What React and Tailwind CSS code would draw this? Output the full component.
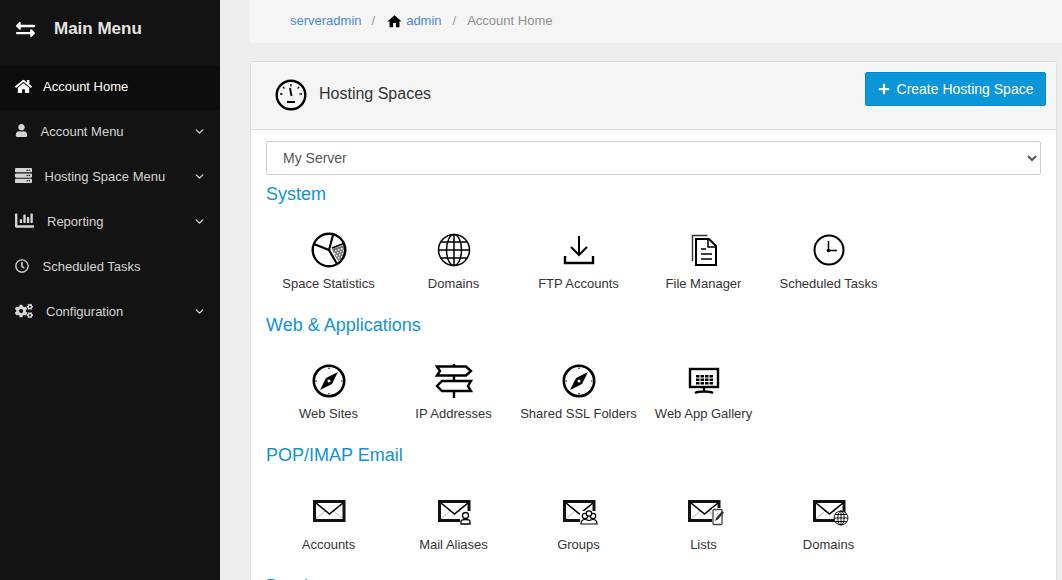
import { FaHome, FaUser, FaServer, FaChartBar, FaCogs, FaExchangeAlt, FaPlus, FaRegClock } from "react-icons/fa"
import { MdHome } from "react-icons/md"
import { LuChevronDown } from "react-icons/lu"

const FONT = "font-['Liberation_Sans',Arial,sans-serif]"

const MENU = [
  { label: "Account Home", Icon: FaHome, w: "w-[28px]", active: true, size: 17 },
  { label: "Account Menu", Icon: FaUser, w: "w-[25.500px]", caret: true, size: 13 },
  { label: "Hosting Space Menu", Icon: FaServer, w: "w-[29.500px]", caret: true, size: 17 },
  { label: "Reporting", Icon: FaChartBar, w: "w-[32px]", caret: true, size: 19 },
  { label: "Scheduled Tasks", Icon: FaRegClock, w: "w-[27.500px]", size: 14 },
  { label: "Configuration", Icon: FaCogs, w: "w-[31px]", caret: true, size: 18 },
]

// dotted slice of the pie, listed by hand
const PIE_DOTS = [
  [24, 18], [27, 17], [30, 16],
  [23, 21], [26, 20], [29, 19], [32, 18],
  [25, 23], [28, 22], [31, 21],
  [27, 25], [30, 24],
  [28, 28], [31, 27],
]

function Pie() {
  return (
    <svg width="36" height="36" viewBox="0 0 36 36" fill="none" stroke="#000" strokeWidth="2.400">
      <path d="M21 17l12-4c2 7 0 13-5 17l-3.500-5z" fill="#777" stroke="none" />
      {PIE_DOTS.map(([x, y]) => (
        <rect key={x + "-" + y} x={x} y={y} width="1.500" height="1.500" fill="#fff" stroke="none" />
      ))}
      <circle cx="18" cy="18" r="16.300" />
      <path d="M3 12l15 6 4-15" strokeWidth="2.200" />
      <path d="M18 18l8 14" strokeWidth="2.200" />
      <path d="M21 16l13-5" strokeWidth="1.600" />
    </svg>
  )
}

function Globe() {
  return (
    <svg width="34" height="34" viewBox="0 0 34 34" fill="none" stroke="#000" strokeWidth="1.500">
      <circle cx="17" cy="17" r="15.500" />
      <ellipse cx="17" cy="17" rx="7.500" ry="15.500" />
      <path d="M17 1.500v31M1.500 17h31M4 9h26M4 25h26" />
    </svg>
  )
}

function Download() {
  return (
    <svg width="32" height="30" viewBox="0 0 32 30" fill="none" stroke="#000" strokeWidth="2">
      <path d="M16 1v18M8 12l8 8 8-8" />
      <path d="M2 21v7h28v-7" strokeWidth="2.400" />
    </svg>
  )
}

function Doc() {
  return (
    <svg width="26" height="32" viewBox="0 0 26 32" fill="none" stroke="#000" strokeWidth="2">
      <path d="M1.500 27V1.500h15" strokeWidth="1.400" stroke="#333" />
      <path d="M5 31V5h13l7 7v19z" strokeWidth="2" />
      <path d="M17 5v8h8" strokeWidth="1.500" />
      <path d="M10 15h5M10 20h11M10 25h11" strokeWidth="1.400" />
    </svg>
  )
}

function Clock() {
  return (
    <svg width="32" height="32" viewBox="0 0 32 32" fill="none" stroke="#000" strokeWidth="2">
      <circle cx="16" cy="16" r="14.500" />
      <path d="M15.500 7v9.500H24" strokeWidth="1.500" />
      <circle cx="15.500" cy="16.500" r="1.800" fill="#000" stroke="none" />
    </svg>
  )
}

function Compass() {
  return (
    <svg width="34" height="34" viewBox="0 0 34 34" fill="none" stroke="#000" strokeWidth="2.600">
      <circle cx="17" cy="17" r="15.200" />
      <path d="M26 8l-12 6-6 12 12-6z" fill="#000" stroke="none" />
      <circle cx="17" cy="17" r="1.500" fill="#fff" stroke="none" />
      <path d="M17 3.500v1.500M17 29v1.500M3.500 17H5M29 17h1.500" strokeWidth="1.200" />
    </svg>
  )
}

function Signpost() {
  return (
    <svg width="38" height="34" viewBox="0 0 38 34" fill="none" stroke="#000" strokeWidth="2.400">
      <path d="M2 2.500h29l5 4.500-5 4.500H2l3-4.500z" />
      <path d="M36 17H7l-5 5 5 5h29l-3-5z" />
      <path d="M19 0v2.500M19 11.500V17M19 27v7" />
    </svg>
  )
}

function Monitor() {
  const keys = []
  for (let y = 9; y < 17; y += 3.500) {
    for (let x = 8; x < 26; x += 4.500) {
      keys.push(<rect key={x + "-" + y} x={x} y={y} width="3.500" height="2.500" fill="#000" stroke="none" />)
    }
  }
  return (
    <svg width="32" height="30" viewBox="0 0 32 30" fill="none" stroke="#000" strokeWidth="2.400">
      <rect x="2" y="3" width="28" height="18" />
      {keys}
      <path d="M16 21v4M7 27c3-2 15-2 18 0" />
    </svg>
  )
}

function Mail({ badge }) {
  return (
    <svg width="36" height="26" viewBox="0 0 36 26" fill="none" className="overflow-visible">
      <g transform="translate(2 1)">
        <rect x="1.500" y="2.500" width="29.500" height="19" stroke="#111" strokeWidth="3" />
        <path d="M3 4l13.500 11L30 4" stroke="#000" strokeWidth="1.600" />
        <path d="M3 20l9-8M30 20l-9-8" stroke="#999" strokeWidth="0.700" />
      </g>
      {badge === "user" && (
        <g transform="translate(0 1)">
          <rect x="24" y="12" width="11" height="14" fill="#fff" />
          <circle cx="29.500" cy="16.500" r="3" fill="#fff" stroke="#000" strokeWidth="1.300" />
          <path d="M25 25v-2.500c0-1.500 2-2 4.500-2s4.500.5 4.500 2V25z" fill="#fff" stroke="#000" strokeWidth="1.300" />
        </g>
      )}
      {badge === "group" && (
        <g transform="translate(0 1)" stroke="#000" strokeWidth="1.200" fill="#fff">
          <rect x="19" y="12" width="18" height="14" fill="#fff" stroke="none" />
          <circle cx="24" cy="17" r="2.700" />
          <circle cx="32" cy="17" r="2.700" />
          <circle cx="28" cy="14.500" r="2.700" />
          <path d="M20 25c0-3 2-4.500 4-4.500s3 1 4 1 2-1 4-1 4 1.500 4 4.500z" />
        </g>
      )}
      {badge === "list" && (
        <g transform="translate(2 1)">
          <rect x="24" y="9" width="12" height="17" fill="#fff" />
          <rect x="25" y="10.500" width="9" height="15" rx="1" fill="#fff" stroke="#444" strokeWidth="1.300" />
          <path d="M27 22l1-3 6-7 2 1.500-6 7z" fill="#333" />
        </g>
      )}
      {badge === "globe" && (
        <g transform="translate(1 1)" stroke="#000" strokeWidth="0.900" fill="none">
          <circle cx="29" cy="19" r="7" fill="#fff" />
          <ellipse cx="29" cy="19" rx="3.200" ry="7" />
          <path d="M29 12v14M22 19h14M23 15.500h12M23 22.500h12" />
        </g>
      )}
    </svg>
  )
}

const SECTIONS = [
  {
    title: "System",
    items: [
      ["Space Statistics", <Pie />],
      ["Domains", <Globe />],
      ["FTP Accounts", <Download />],
      ["File Manager", <Doc />],
      ["Scheduled Tasks", <Clock />],
    ],
  },
  {
    title: "Web & Applications",
    items: [
      ["Web Sites", <Compass />],
      ["IP Addresses", <Signpost />],
      ["Shared SSL Folders", <Compass />],
      ["Web App Gallery", <Monitor />],
    ],
  },
  {
    title: "POP/IMAP Email",
    items: [
      ["Accounts", <Mail />],
      ["Mail Aliases", <Mail badge="user" />],
      ["Groups", <Mail badge="group" />],
      ["Lists", <Mail badge="list" />],
      ["Domains", <Mail badge="globe" />],
    ],
  },
]

function Sidebar() {
  return (
    <aside className="w-[220px] h-full shrink-0 bg-[#131313] text-[#d5d5d5] text-[13px]">
      <div className="h-[66px] flex items-center text-white">
        <FaExchangeAlt size={19} className="ml-[16px] mb-[7px] -scale-x-100" />
        <span className="ml-[19px] mb-[9px] text-[17px] font-bold text-[#e4e4e4]">Main Menu</span>
      </div>
      {MENU.map(({ label, Icon, w, active, caret, size }) => (
        <div
          key={label}
          className={`flex items-center pb-[2px] pl-[15px] pr-[14px] ${active ? "h-[44px] bg-[#0d0d0d] text-white" : "h-[45px]"}`}
        >
          <span className={`${w} flex shrink-0 mb-[2px]`}>
            <Icon size={size} />
          </span>
          <span className="flex-1">{label}</span>
          {caret && <LuChevronDown size={13} strokeWidth={2.500} />}
        </div>
      ))}
    </aside>
  )
}

function Breadcrumb() {
  return (
    <div className="h-[43px] bg-[#f5f5f5] flex items-center pl-[40px] pb-[1px] text-[13px]">
      <a className="text-[#4a8bce]">serveradmin</a>
      <span className="mx-[10px] text-[#999]">/</span>
      <MdHome size={17} className="text-black ml-[1px] mr-[3px]" />
      <a className="text-[#4a8bce]">admin</a>
      <span className="mx-[11px] text-[#999]">/</span>
      <span className="text-[#8f8f8f]">Account Home</span>
    </div>
  )
}

function Gauge() {
  return (
    <svg width="32" height="32" viewBox="0 0 32 32" fill="none" stroke="#000" strokeWidth="2.400">
      <circle cx="16" cy="16" r="14.300" />
      <path d="M16 5v2.500M8 8l1.500 1.500M24 8l-1.500 1.500M5 15h2.500M24.500 15H27" strokeWidth="1.300" />
      <path d="M15 9l1.500 8" strokeWidth="1.800" />
      <path d="M12 23h8" strokeWidth="2" />
    </svg>
  )
}

export default function App() {
  return (
    <div className={`${FONT} w-[1062px] h-[580px] overflow-hidden flex bg-[#eeeeee]`}>
      <Sidebar />
      <main className="flex-1 pl-[30px] min-w-0">
        <Breadcrumb />
        <section className="mt-[18px] mr-[5px] h-[600px] bg-white border border-[#ddd] rounded-[3px]">
          <div className="h-[68px] bg-[#f5f5f5] border-b border-[#ddd] flex justify-between pl-[24px] pr-[10px]">
            <div className="flex items-center mt-[-2px] text-[16px] text-[#333]">
              <Gauge />
              <span className="ml-[12px] mb-[2px]">Hosting Spaces</span>
            </div>
            <button className="h-[34px] w-[181px] mt-[10px] bg-[#0a96d8] border border-[#0787c4] rounded-[2px] flex items-center justify-center text-white text-[14px]">
              <FaPlus size={12} className="mr-[7px]" />
              Create Hosting Space
            </button>
          </div>
          <div className="px-[15px] pt-[11px]">
            <select className="w-full h-[34px] pl-[12px] pr-[2px] bg-white border border-[#ccc] rounded-[2px] text-[14px] text-[#555]">
              <option>My Server</option>
            </select>
            {SECTIONS.map((s) => (
              <div key={s.title} className="h-[130.500px] pt-[9px]">
                <h3 className="text-[18px] leading-[20px] text-[#0f93d6]">{s.title}</h3>
                <div className="flex mt-[26px]">
                  {s.items.map(([label, icon]) => (
                    <div key={label} className="w-[125px] flex flex-col items-center text-[13px] text-[#333]">
                      <div className="h-[40px] flex items-center justify-center">{icon}</div>
                      <span className="mt-[4.500px] leading-[18px]">{label}</span>
                    </div>
                  ))}
                </div>
              </div>
            ))}
            <h3 className="text-[18px] leading-[20px] text-[#0f93d6] pt-[9px]">Databases</h3>
          </div>
        </section>
      </main>
    </div>
  )
}
